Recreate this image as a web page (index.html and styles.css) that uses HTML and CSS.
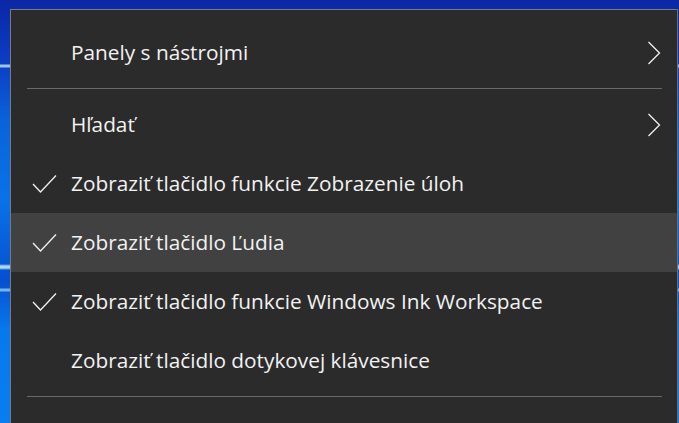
FILE: index.html
```html
<!DOCTYPE html>
<html lang="sk">
<head>
<meta charset="utf-8">
<link rel="stylesheet" href="styles.css">
</head>
<body>
<div class="desktop">
  <div class="menu">
    <div class="item">
      <span class="mark"></span>
      <span class="label">Panely s nástrojmi</span>
      <span class="arrow"><svg width="14" height="24" viewBox="0 0 14 24"><path d="M1.5 1 L12.5 12 L1.5 23" fill="none" stroke="#f2f2f2" stroke-width="1.3"/></svg></span>
    </div>
    <div class="sep"></div>
    <div class="item">
      <span class="mark"></span>
      <span class="label">Hľadať</span>
      <span class="arrow"><svg width="14" height="24" viewBox="0 0 14 24"><path d="M1.5 1 L12.5 12 L1.5 23" fill="none" stroke="#f2f2f2" stroke-width="1.3"/></svg></span>
    </div>
    <div class="item">
      <span class="mark"><svg width="26" height="20" viewBox="0 0 26 20"><path d="M1 10 L8.5 18 L24 1.5" fill="none" stroke="#f2f2f2" stroke-width="1.3"/></svg></span>
      <span class="label">Zobraziť tlačidlo funkcie Zobrazenie úloh</span>
      <span class="arrow"></span>
    </div>
    <div class="item hover">
      <span class="mark"><svg width="26" height="20" viewBox="0 0 26 20"><path d="M1 10 L8.5 18 L24 1.5" fill="none" stroke="#f2f2f2" stroke-width="1.3"/></svg></span>
      <span class="label">Zobraziť tlačidlo Ľudia</span>
      <span class="arrow"></span>
    </div>
    <div class="item">
      <span class="mark"><svg width="26" height="20" viewBox="0 0 26 20"><path d="M1 10 L8.5 18 L24 1.5" fill="none" stroke="#f2f2f2" stroke-width="1.3"/></svg></span>
      <span class="label">Zobraziť tlačidlo funkcie Windows Ink Workspace</span>
      <span class="arrow"></span>
    </div>
    <div class="item">
      <span class="mark"></span>
      <span class="label">Zobraziť tlačidlo dotykovej klávesnice</span>
      <span class="arrow"></span>
    </div>
    <div class="sep"></div>
    <div class="item">
      <span class="mark"></span>
      <span class="label"></span>
      <span class="arrow"></span>
    </div>
  </div>
</div>
</body>
</html>
```
FILE: styles.css
```css
html, body {
  margin: 0;
  padding: 0;
  width: 679px;
  height: 423px;
  overflow: hidden;
}

.desktop {
  width: 679px;
  height: 423px;
  overflow: hidden;
  padding: 9px 0 0 10px;
  box-sizing: border-box;
  background:
    linear-gradient(180deg, transparent 64px, rgba(190,230,255,0.8) 65px, rgba(190,230,255,0.8) 67px, transparent 68px),
    linear-gradient(180deg, transparent 264px, rgba(200,240,255,0.85) 266px, rgba(200,240,255,0.85) 268px, transparent 270px),
    linear-gradient(180deg, transparent 288px, rgba(160,220,255,0.7) 289px, rgba(160,220,255,0.7) 291px, transparent 292px),
    linear-gradient(180deg, #0b27a6 0px, #0d3bc4 60px, #0a62dc 120px, #0a72e8 200px, #0650d0 280px, #0878ee 330px, #0a7df2 423px);
}

.menu {
  width: 668px;
  height: 440px;
  box-sizing: border-box;
  background: #2b2b2b;
  border: 1px solid #7a7a7a;
  border-right-color: #6e6e6e;
  padding-top: 13px;
  display: flex;
  flex-direction: column;
  font-family: "Open Sans", "Noto Sans", sans-serif;
  font-size: 20.8px;
  color: #f2f2f2;
}

.item {
  height: 59px;
  flex: none;
  display: grid;
  grid-template-columns: 60px 1fr 30px;
  align-items: center;
}

.item.hover {
  background: #414141;
}

.mark {
  display: flex;
  justify-content: flex-end;
  padding-right: 13px;
  align-items: center;
}

.mark svg {
  display: block;
}

.label {
  white-space: nowrap;
  line-height: 1;
}

.arrow {
  display: flex;
  align-items: center;
}

.arrow svg {
  display: block;
}

.sep {
  flex: none;
  height: 13px;
  display: flex;
  align-items: center;
  padding: 0 15px 0 16px;
}

.sep::before {
  content: "";
  display: block;
  flex: 1;
  height: 1px;
  background: #6a6a6a;
}
```
